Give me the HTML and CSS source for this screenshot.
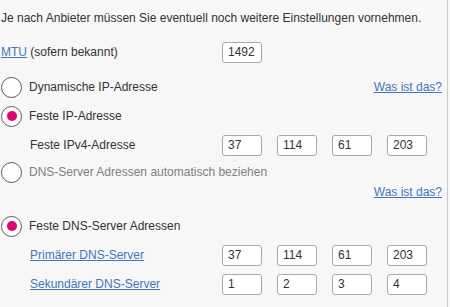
FILE: index.html
```html
<!DOCTYPE html>
<html lang="de">
<head>
<meta charset="UTF-8">
<title>Interneteinstellungen</title>
<link rel="stylesheet" href="styles.css">
</head>
<body>
    <div class="panel">
        <p class="intro">Je nach Anbieter müssen Sie eventuell noch weitere Einstellungen vornehmen.</p>

        <!-- MTU -->
        <div class="row row-mtu">
            <span class="label"><a href="#">MTU</a> (sofern bekannt)</span>
            <input class="field" type="text" value="1492">
        </div>

        <!-- IP-Adresse -->
        <div class="row row-radio row-first">
            <span class="radio"></span>
            <span class="radio-text">Dynamische IP-Adresse</span>
            <a class="help" href="#">Was ist das?</a>
        </div>
        <div class="row row-radio row-tight">
            <span class="radio checked"></span>
            <span class="radio-text">Feste IP-Adresse</span>
        </div>
        <div class="row row-tight">
            <span class="label sub">Feste IPv4-Adresse</span>
            <input class="field" type="text" value="37">
            <input class="field" type="text" value="114">
            <input class="field" type="text" value="61">
            <input class="field" type="text" value="203">
        </div>

        <!-- DNS -->
        <div class="row row-radio row-small disabled">
            <span class="radio"></span>
            <span class="radio-text">DNS-Server Adressen automatisch beziehen</span>
        </div>
        <div class="row row-small row-link">
            <a class="help" href="#">Was ist das?</a>
        </div>
        <div class="row row-radio row-first">
            <span class="radio checked"></span>
            <span class="radio-text">Feste DNS-Server Adressen</span>
        </div>
        <div class="row row-tight">
            <span class="label sub"><a href="#">Primärer DNS-Server</a></span>
            <input class="field" type="text" value="37">
            <input class="field" type="text" value="114">
            <input class="field" type="text" value="61">
            <input class="field" type="text" value="203">
        </div>
        <div class="row row-tight">
            <span class="label sub"><a href="#">Sekundärer DNS-Server</a></span>
            <input class="field" type="text" value="1">
            <input class="field" type="text" value="2">
            <input class="field" type="text" value="3">
            <input class="field" type="text" value="4">
        </div>
    </div>
</body>
</html>
```

FILE: styles.css
```css
body {
    margin: 0;
    background: #f7f7f7;
    font-family: Arial, "Liberation Sans", sans-serif;
    font-size: 12px;
    color: #333;
}
a {
    color: #3d78be;
}
.panel {
    width: 448px;
    height: 307px;
    border-right: 1px solid #c9c9c9;
    padding-top: 7px;
    box-sizing: border-box;
}
.intro {
    margin: 0 0 0 1px;
    height: 22px;
    line-height: 22px;
    white-space: nowrap;
}

/* rows */
.row {
    display: flex;
    align-items: center;
    height: 22px;
    margin-top: 8px;
}
.row-mtu {
    margin-top: 12px;
}
.row-first {
    margin-top: 13px;
}
.row-tight {
    margin-top: 7px;
}
.row-small {
    height: 20px;
    margin-top: 6px;
}
.row-link {
    margin-top: 0;
}
.label {
    width: 222px;
    padding-left: 1px;
    box-sizing: border-box;
    flex-shrink: 0;
    white-space: nowrap;
}
.label.sub {
    padding-left: 30px;
}
.field {
    width: 40px;
    height: 21px;
    margin: 0 15px 0 0;
    padding: 0 0 0 5px;
    box-sizing: border-box;
    border: 1px solid #a9a9a9;
    border-radius: 3px;
    background: #fff;
    font-family: inherit;
    font-size: 12px;
    color: #333;
}

/* radio */
.radio {
    width: 19px;
    height: 19px;
    margin-left: 1px;
    border: 1.5px solid #5a5a5a;
    border-radius: 50%;
    background: #fff;
    display: flex;
    align-items: center;
    justify-content: center;
    flex-shrink: 0;
}
.radio.checked::after {
    content: "";
    width: 10px;
    height: 10px;
    border-radius: 50%;
    background: #e20074;
}
.radio-text {
    margin-left: 7px;
}
.disabled .radio-text {
    color: #808080;
}
.help {
    margin-left: auto;
    margin-right: 5px;
}
```
